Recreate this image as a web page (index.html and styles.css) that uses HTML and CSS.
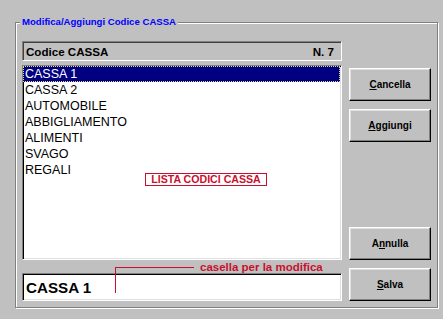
FILE: index.html
```html
<!DOCTYPE html>
<html lang="it">
<head>
  <meta charset="UTF-8" />
  <title>Modifica/Aggiungi Codice CASSA</title>
  <link rel="stylesheet" href="styles.css">
</head>
<body>

  <div class="group">
    <span class="group-title">Modifica/Aggiungi Codice CASSA</span>

    <div class="col-main">
      <div class="list-head">
        <span>Codice CASSA</span>
        <span>N. 7</span>
      </div>

      <div class="list">
        <ul class="items">
          <li class="selected">CASSA 1</li>
          <li>CASSA 2</li>
          <li>AUTOMOBILE</li>
          <li>ABBIGLIAMENTO</li>
          <li>ALIMENTI</li>
          <li>SVAGO</li>
          <li>REGALI</li>
        </ul>
        <span class="tag">LISTA CODICI CASSA</span>
      </div>

      <div class="edit">CASSA 1</div>

      <div class="pointer"></div>
      <span class="note">casella per la modifica</span>
    </div>

    <div class="col-buttons">
      <button class="btn"><u>C</u>ancella</button>
      <button class="btn btn-pair"><u>A</u>ggiungi</button>
      <button class="btn btn-low">A<u>n</u>nulla</button>
      <button class="btn btn-pair"><u>S</u>alva</button>
    </div>
  </div>

</body>
</html>
```

FILE: styles.css
```css
html, body {
  margin: 0;
  width: 443px;
  height: 319px;
  overflow: hidden;
}
body {
  background: #c0c0c0;
  font-family: "Liberation Sans", Arial, sans-serif;
  padding: 22px 0 0 15px;
  box-sizing: border-box;
}
.group {
  position: relative;
  box-sizing: border-box;
  width: 423px;
  height: 286px;
  border: 1px solid #808080;
  box-shadow: 1px 1px 0 #fff, inset 1px 1px 0 #fff;
  padding: 18px 5px 6px 6px;
  display: flex;
  gap: 7px;
}
.group-title {
  position: absolute;
  top: -8px;
  left: 4px;
  padding: 0 2px;
  background: #c0c0c0;
  color: #0000ff;
  font-size: 9.6px;
  font-weight: bold;
  line-height: 14px;
}

/* left column */
.col-main {
  position: relative;
  width: 320px;
  display: flex;
  flex-direction: column;
}
.list-head {
  box-sizing: border-box;
  height: 20px;
  margin-bottom: 4px;
  border: 1px solid;
  border-color: #808080 #fff #fff #808080;
  box-shadow: inset 1px 1px 0 #404040;
  display: flex;
  justify-content: space-between;
  align-items: center;
  padding: 1px 7px 0 3px;
  font-size: 11.6px;
  font-weight: bold;
  color: #000;
}
.list {
  position: relative;
  box-sizing: border-box;
  height: 195px;
  margin-bottom: 13px;
  background: #fff;
  border: 1px solid;
  border-color: #808080 #fff #fff #808080;
  box-shadow: inset 1px 1px 0 #000, inset -1px -1px 0 #dfdfdf;
}
.items {
  list-style: none;
  margin: 0;
  padding: 0 1px 0 0;
}
.items li {
  height: 16px;
  line-height: 16px;
  padding-left: 2px;
  font-size: 12.5px;
  color: #000;
}
.items li.selected {
  background: #000080;
  color: #fff;
  outline: 1px dotted #e0e080;
  outline-offset: -1px;
}
.tag {
  position: absolute;
  left: 122px;
  top: 107px;
  box-sizing: border-box;
  width: 122px;
  height: 13px;
  border: 1px solid #c8102e;
  background: #fff;
  color: #c8102e;
  font-size: 10.6px;
  font-weight: bold;
  line-height: 11px;
  text-align: center;
}
.edit {
  box-sizing: border-box;
  height: 28px;
  background: #fff;
  border: 1px solid;
  border-color: #808080 #fff #fff #808080;
  box-shadow: inset 1px 1px 0 #000, inset -1px -1px 0 #dfdfdf;
  padding: 1px 0 0 3px;
  font-size: 15.2px;
  font-weight: bold;
  line-height: 25px;
  color: #000;
}
.pointer {
  position: absolute;
  left: 93px;
  top: 226px;
  width: 78px;
  height: 25px;
  border-top: 1px solid #c8102e;
  border-left: 1px solid #c8102e;
}
.note {
  position: absolute;
  left: 178px;
  top: 219px;
  color: #c8102e;
  font-size: 11.5px;
  font-weight: bold;
  line-height: 14px;
}

/* right column */
.col-buttons {
  width: 82px;
  padding-top: 27px;
  display: flex;
  flex-direction: column;
}
.btn {
  box-sizing: border-box;
  height: 33px;
  width: 100%;
  padding: 0;
  background: #c0c0c0;
  border: 1px solid;
  border-color: #fff #000 #000 #fff;
  box-shadow: inset -1px -1px 0 #808080, inset 1px 1px 0 #dfdfdf;
  font-family: "Liberation Sans", Arial, sans-serif;
  font-size: 10px;
  font-weight: bold;
  color: #000;
}
.btn-pair {
  margin-top: 8px;
}
.btn-low {
  margin-top: auto;
}
```
